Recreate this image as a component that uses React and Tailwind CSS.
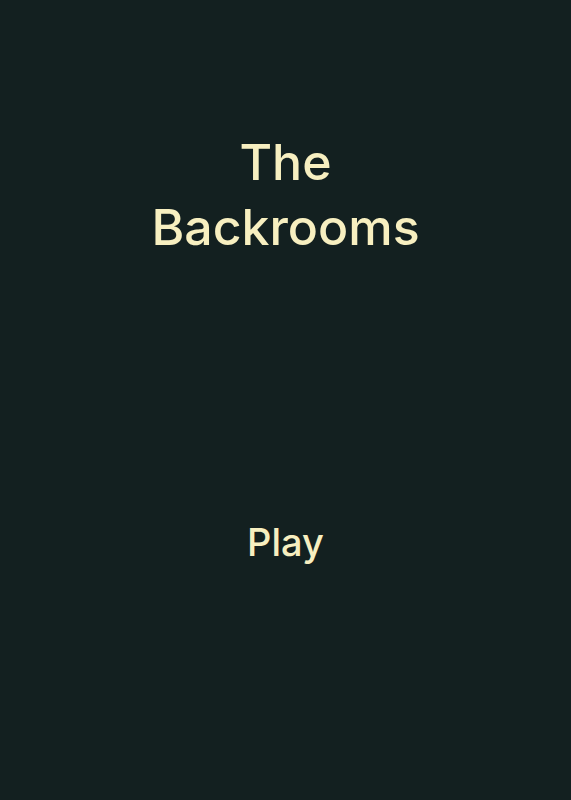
export default function App() {
  return (
    <main className="flex min-h-[800px] w-full flex-col items-center bg-[#132020] text-[#f7efc0] font-['Inter',sans-serif]">
      <h1 className="mt-[130px] text-center text-[50px] leading-[65px] font-medium">
        The
        <br />
        Backrooms
      </h1>
      <button className="mt-[255px] text-[38px] leading-[54px] font-medium">Play</button>
    </main>
  );
}
